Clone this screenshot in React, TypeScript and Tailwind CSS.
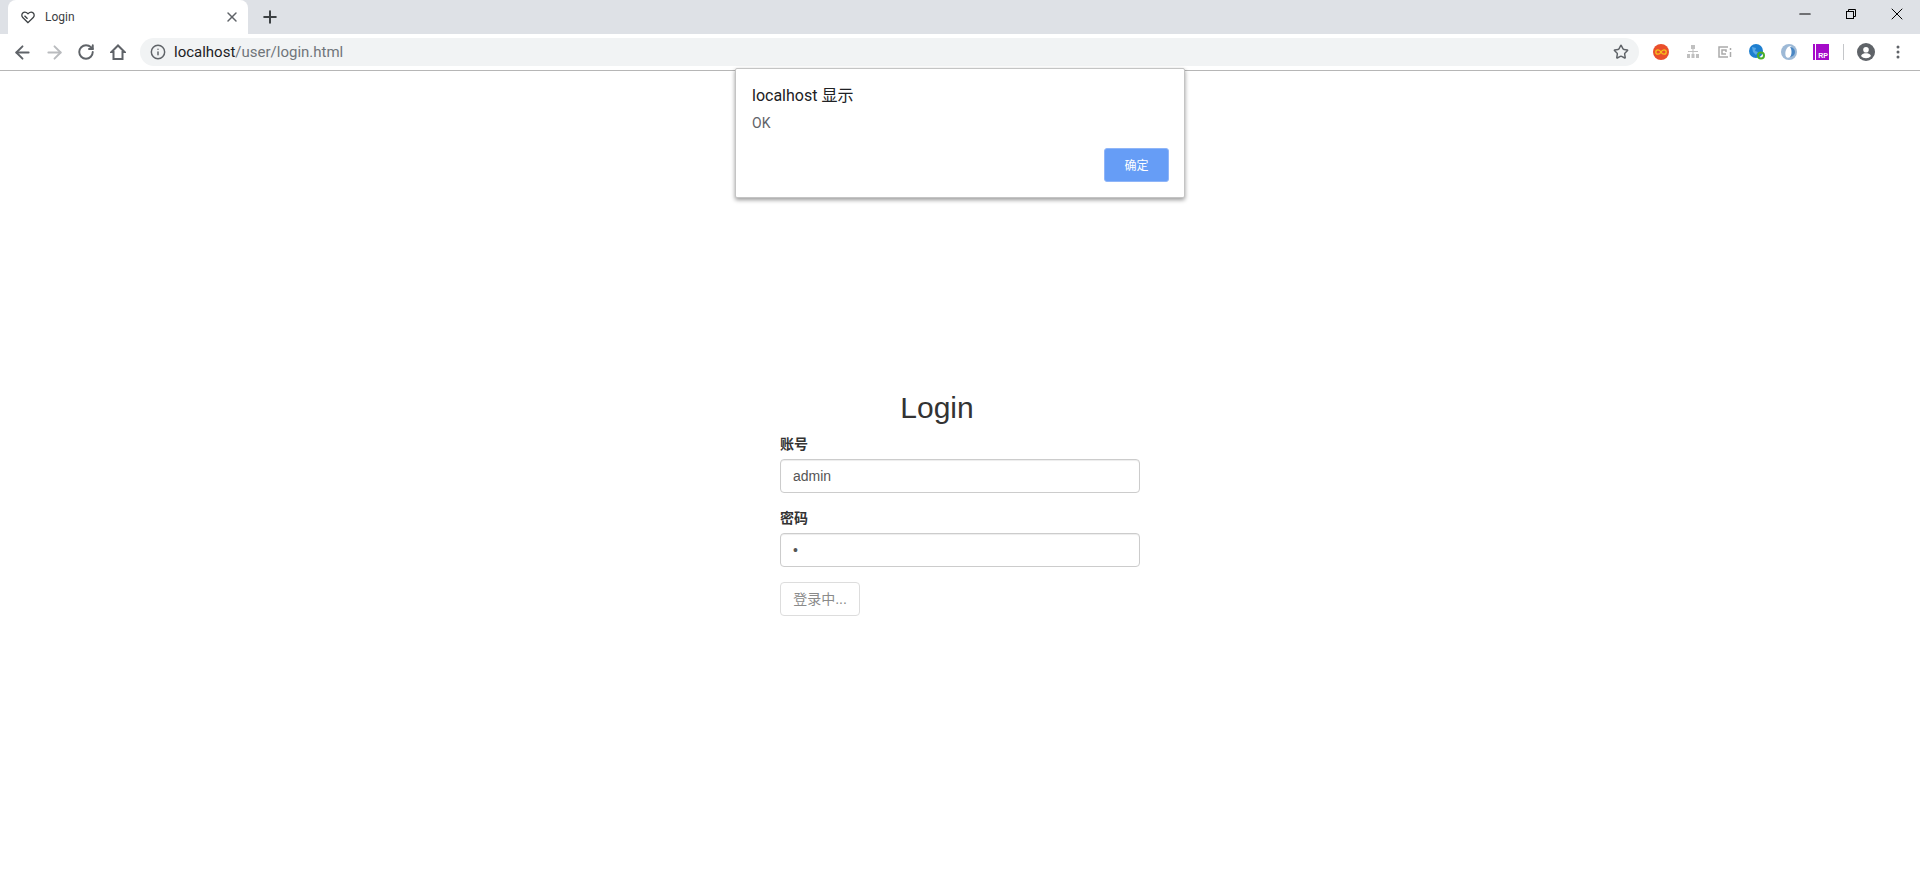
import React from "react";
import { ArrowLeft, ArrowRight, RotateCw, Info, Star, X, Plus, Minus } from "lucide-react";

const sans = "font-['Liberation_Sans','Noto_Sans_CJK_SC',sans-serif]";
const roboto = "font-['Roboto','Noto_Sans_CJK_SC',sans-serif]";

const TabBar = () => (
  <div className="flex h-[34px] bg-[#dee1e6]">
    <div className="ml-2 flex h-[34px] w-[240px] items-center rounded-t-lg bg-white pl-[13px] pr-2">
      <svg viewBox="0 0 16 16" className="h-[14px] w-[14px] text-[#3c4043]" fill="none" stroke="currentColor" strokeWidth="1.5">
        <path d="M8 14.500L2 8.500a3.500 3.500 0 0 1 0-5C3.500 2 5.600 2 8 4.200 10.400 2 12.500 2 14 3.500a3.500 3.500 0 0 1 0 5z" />
        <path d="M4 6.500L7.500 10" />
      </svg>
      <span className={`ml-[10px] flex-1 text-xs text-[#3c4043] ${roboto}`}>Login</span>
      <X className="h-4 w-4 text-[#5f6368]" strokeWidth={2.2} />
    </div>
    <div className="ml-[12px] flex h-[34px] items-center">
      <Plus className="h-5 w-5 text-[#3c4043]" strokeWidth={2.4} />
    </div>
    <div className="flex-1" />
    <div className="flex h-[28px] items-center text-black">
      <div className="flex w-[46px] justify-center"><Minus className="h-[18px] w-[18px]" strokeWidth={1.4} /></div>
      <div className="flex w-[46px] justify-center">
        <svg viewBox="0 0 10 10" className="h-[10px] w-[10px]" fill="none" stroke="currentColor" strokeWidth="1">
          <rect x="0.5" y="2.5" width="7" height="7" />
          <path d="M2.500 2.500V0.500H9.500V7.500H7.500" />
        </svg>
      </div>
      <div className="flex w-[46px] justify-center"><X className="h-5 w-5" strokeWidth={1.2} /></div>
    </div>
  </div>
);

const ToolbarIcons = () => (
  <div className="ml-[6px] flex items-center">
    <div className="flex w-[32px] justify-center">
      <svg viewBox="0 0 16 16" className="h-4 w-4">
        <circle cx="8" cy="8" r="8" fill="#ea4f2b" />
        <path d="M8 8c-1-1.800-2-2.200-3-2.200a2.200 2.200 0 0 0 0 4.400C6 10.200 7 9.800 8 8s2-2.200 3-2.200a2.200 2.200 0 0 1 0 4.400C10 10.200 9 9.800 8 8z" fill="none" stroke="#f6c21c" strokeWidth="1.3" />
      </svg>
    </div>
    <div className="flex w-[32px] justify-center">
      <svg viewBox="0 0 16 16" className="h-4 w-4" fill="#c0c0c0">
        <rect x="6" y="1" width="4" height="4" />
        <rect x="2" y="10" width="3" height="4" />
        <rect x="6.500" y="10" width="3" height="4" />
        <rect x="11" y="10" width="3" height="4" />
        <rect x="7.500" y="5" width="1" height="5" />
        <rect x="3" y="7" width="10" height="1" />
      </svg>
    </div>
    <div className="flex w-[32px] justify-center">
      <svg viewBox="0 0 16 16" className="h-4 w-4" fill="none" stroke="#aaa" strokeWidth="1.5">
        <path d="M11 13H2V3H11" />
        <path d="M9 10H5V6H9V8" />
        <path d="M13.500 4V6M13.500 8V13" />
      </svg>
    </div>
    <div className="flex w-[32px] justify-center">
      <svg viewBox="0 0 16 16" className="h-4 w-4">
        <circle cx="7" cy="7" r="7" fill="#1e7fd0" />
        <path d="M3 3l4 1-1 3 3 1-2 3-3-3z" fill="#5aa9e6" />
        <circle cx="12" cy="11.500" r="3" fill="none" stroke="#4caf2a" strokeWidth="2" />
      </svg>
    </div>
    <div className="flex w-[32px] justify-center">
      <svg viewBox="0 0 16 16" className="h-4 w-4">
        <circle cx="8" cy="8" r="8" fill="#9db9d6" />
        <ellipse cx="8" cy="8" rx="3.500" ry="6" fill="#fff" transform="rotate(15 8 8)" />
        <path d="M9 3a5 5 0 0 1 0 10c2-2 2-8 0-10z" fill="#4a87c4" />
      </svg>
    </div>
    <div className="flex w-[32px] justify-center">
      <div className="relative h-4 w-4 bg-[#a50bc9]">
        <div className="absolute left-[2px] top-0 h-4 w-[1px] bg-white" />
        <span className={`absolute bottom-0 right-[1px] text-[7px] font-bold leading-[9px] text-white ${sans}`}>RP</span>
      </div>
    </div>
    <div className="ml-[6px] h-[16px] w-px bg-[#c4c6c9]" />
    <div className="ml-2 flex w-[28px] justify-center">
      <svg viewBox="0 0 16 16" className="h-[18px] w-[18px]">
        <circle cx="8" cy="8" r="8" fill="#5f6368" />
        <circle cx="8" cy="6" r="2.500" fill="#fff" />
        <path d="M3.500 11.500c1-1.800 2.800-2.300 4.500-2.300s3.500.5 4.500 2.300a5.800 5.800 0 0 1-9 0z" fill="#fff" />
      </svg>
    </div>
    <div className="ml-[6px] flex w-[24px] justify-center">
      <svg viewBox="0 0 4 14" className="h-[14px] w-1" fill="#5f6368">
        <circle cx="2" cy="2" r="1.5" />
        <circle cx="2" cy="7" r="1.5" />
        <circle cx="2" cy="12" r="1.5" />
      </svg>
    </div>
  </div>
);

const Toolbar = () => (
  <div className="flex h-[37px] items-center border-b border-[#b6b6b6] bg-white">
    <div className="ml-[6px] flex items-center text-[#5f6368]">
      <div className="flex w-[32px] justify-center"><ArrowLeft className="h-[21px] w-[21px]" strokeWidth={2.2} /></div>
      <div className="flex w-[32px] justify-center"><ArrowRight className="h-[21px] w-[21px] text-[#b9bbbe]" strokeWidth={2.2} /></div>
      <div className="flex w-[32px] justify-center"><RotateCw className="h-[18px] w-[18px]" strokeWidth={2.6} /></div>
      <div className="flex w-[32px] justify-center">
        <svg viewBox="0 0 16 16" className="h-4 w-4" fill="none" stroke="currentColor" strokeWidth="2">
          <path d="M1.500 8L8 1.500 14.500 8H12.500V15H3.500V8z" strokeLinejoin="miter" />
        </svg>
      </div>
    </div>
    <div className={`ml-[6px] flex h-[28px] w-[1499px] items-center rounded-full bg-[#f1f3f4] pl-[10px] pr-[10px] text-[15px] ${roboto}`}>
      <Info className="h-4 w-4 text-[#5f6368]" strokeWidth={2.2} />
      <span className="ml-2 text-[#202124]">localhost</span>
      <span className="flex-1 text-[#70757a]">/user/login.html</span>
      <Star className="h-4 w-4 text-[#5f6368]" strokeWidth={2.2} />
    </div>
    <ToolbarIcons />
  </div>
);

const AlertDialog = () => (
  <div className={`absolute left-[735px] top-[68px] h-[130px] w-[450px] rounded-[2px] border border-[#c4c4c4] bg-white pl-4 pr-[15px] pt-[17px] shadow-[0_2px_4px_rgba(0,0,0,0.4)] ${roboto}`}>
    <div className="text-base leading-5 text-[#202124]">localhost 显示</div>
    <div className="mt-2 text-sm leading-[18px] text-[#5f6368]">OK</div>
    <div className="mt-4 flex justify-end">
      <button className="h-[34px] w-[65px] rounded-[3px] border border-[#8fb5f8] bg-[#669df6] pt-[2px] text-xs text-white">确定</button>
    </div>
  </div>
);

const Field = ({ label, value, type }: { label: string; value: string; type: string }) => (
  <div className="mb-[15px]">
    <label className="mb-[5px] block text-sm font-bold leading-5 text-[#333]">{label}</label>
    <input
      readOnly
      type={type}
      value={value}
      className="block h-[34px] w-full rounded border border-[#ccc] bg-white px-3 py-1.5 text-sm text-[#555] shadow-[inset_0_1px_1px_rgba(0,0,0,0.075)] outline-none"
    />
  </div>
);

const App = () => (
  <div className={`relative h-[894px] overflow-hidden bg-white ${sans}`}>
    <TabBar />
    <Toolbar />
    <AlertDialog />
    <main className="mx-auto w-[360px] pt-[320px]">
      <h1 className="mb-[10px] w-[314px] text-center text-[30px] font-medium leading-[33px] text-[#333]">Login</h1>
      <form>
        <Field label="账号" value="admin" type="text" />
        <Field label="密码" value="1" type="password" />
        <button type="button" disabled className="h-[34px] w-[80px] rounded border border-[#ddd] bg-white text-sm text-[#8a8a8a]">
          登录中...
        </button>
      </form>
    </main>
  </div>
);

export default App;
